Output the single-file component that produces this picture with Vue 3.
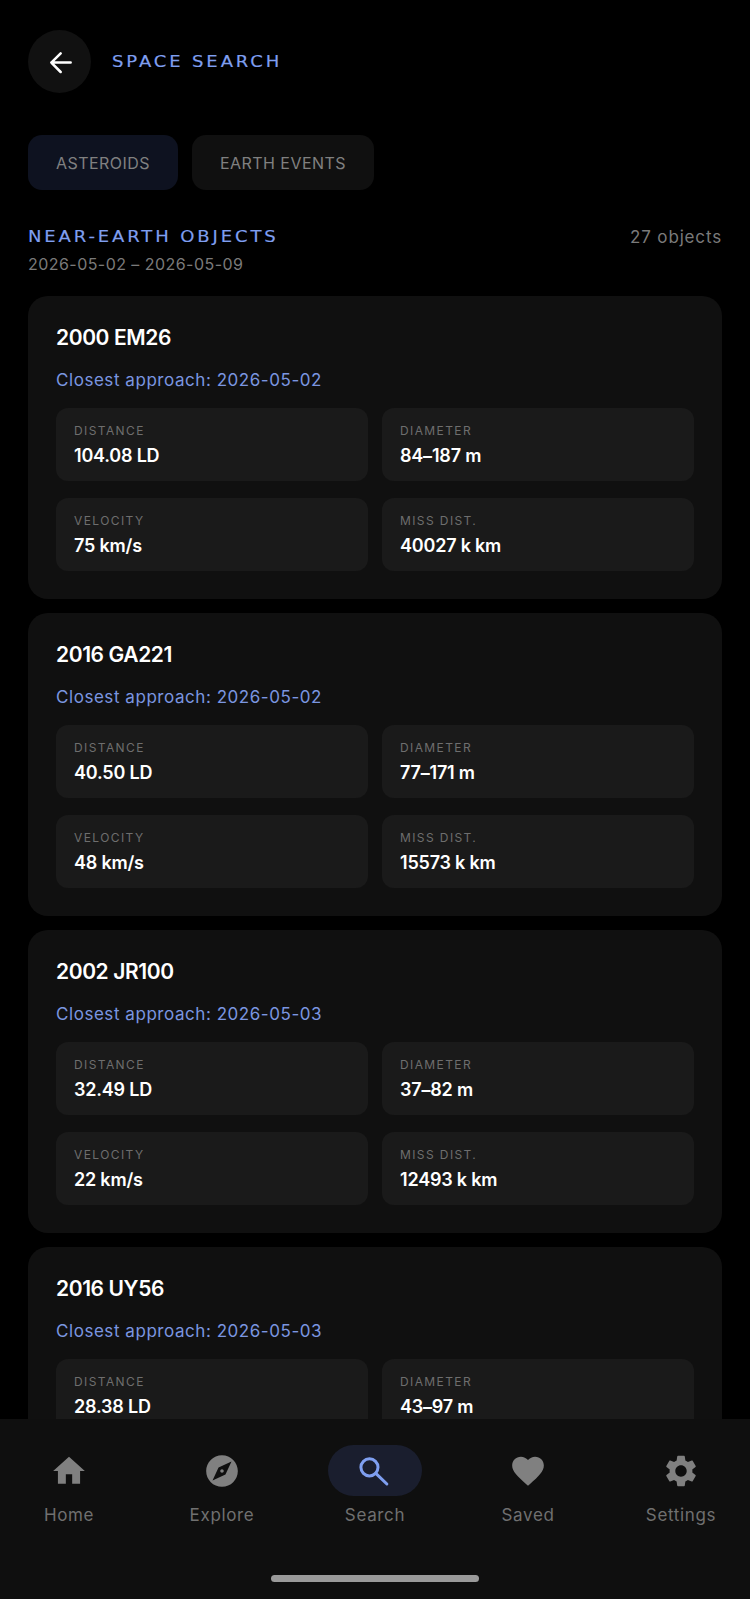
<script setup>
const objects = [
  { name: '2000 EM26', date: '2026-05-02', stats: [['DISTANCE', '104.08 LD'], ['DIAMETER', '84–187 m'], ['VELOCITY', '75 km/s'], ['MISS DIST.', '40027 k km']] },
  { name: '2016 GA221', date: '2026-05-02', stats: [['DISTANCE', '40.50 LD'], ['DIAMETER', '77–171 m'], ['VELOCITY', '48 km/s'], ['MISS DIST.', '15573 k km']] },
  { name: '2002 JR100', date: '2026-05-03', stats: [['DISTANCE', '32.49 LD'], ['DIAMETER', '37–82 m'], ['VELOCITY', '22 km/s'], ['MISS DIST.', '12493 k km']] },
  { name: '2016 UY56', date: '2026-05-03', stats: [['DISTANCE', '28.38 LD'], ['DIAMETER', '43–97 m']] }
]

const navItems = [
  { label: 'Home', d: 'M10 20v-6h4v6h5v-8h3L12 3 2 12h3v8z' },
  { label: 'Explore', d: 'M12 10.9c-.61 0-1.1.49-1.1 1.1s.49 1.1 1.1 1.1c.61 0 1.1-.49 1.1-1.1s-.49-1.1-1.1-1.1zM12 2C6.48 2 2 6.48 2 12s4.48 10 10 10 10-4.48 10-10S17.52 2 12 2zm2.19 12.19L6 18l3.81-8.19L18 6l-3.81 8.19z' },
  { label: 'Search', active: true },
  { label: 'Saved', d: 'M12 21.35l-1.45-1.32C5.4 15.36 2 12.28 2 8.5 2 5.42 4.42 3 7.5 3c1.74 0 3.41.81 4.5 2.09C13.09 3.81 14.76 3 16.5 3 19.58 3 22 5.42 22 8.5c0 3.78-3.4 6.86-8.55 11.54L12 21.35z' },
  { label: 'Settings', d: 'M19.14 12.94c.04-.3.06-.61.06-.94 0-.32-.02-.64-.07-.94l2.03-1.58c.18-.14.23-.41.12-.61l-1.92-3.32c-.12-.22-.37-.29-.59-.22l-2.39.96c-.5-.38-1.03-.7-1.62-.94l-.36-2.54c-.04-.24-.24-.41-.48-.41h-3.84c-.24 0-.43.17-.47.41l-.36 2.54c-.59.24-1.13.57-1.62.94l-2.39-.96c-.22-.08-.47 0-.59.22L2.74 8.87c-.12.21-.08.47.12.61l2.03 1.58c-.05.3-.09.63-.09.94s.02.64.07.94l-2.03 1.58c-.18.14-.23.41-.12.61l1.92 3.32c.12.22.37.29.59.22l2.39-.96c.5.38 1.03.7 1.62.94l.36 2.54c.05.24.24.41.48.41h3.84c.24 0 .44-.17.47-.41l.36-2.54c.59-.24 1.13-.56 1.62-.94l2.39.96c.22.08.47 0 .59-.22l1.92-3.32c.12-.22.07-.47-.12-.61l-2.01-1.58zM12 15.6c-1.98 0-3.6-1.62-3.6-3.6s1.62-3.6 3.6-3.6 3.6 1.62 3.6 3.6-1.62 3.6-3.6 3.6z' }
]
</script>

<template>
  <div class="screen">
    <div class="content">
      <header class="topbar">
        <button class="back-btn">
          <svg viewBox="0 0 24 24" class="back-icon"><path d="M20 12.4H5.5M12.5 5.5l-7 6.9 7 7.1" /></svg>
        </button>
        <span class="page-title">SPACE SEARCH</span>
      </header>

      <div class="tabs">
        <div class="tab tab--active">ASTEROIDS</div>
        <div class="tab">EARTH EVENTS</div>
      </div>

      <div class="section-head">
        <div>
          <div class="section-title">NEAR-EARTH OBJECTS</div>
          <div class="section-range">2026-05-02 – 2026-05-09</div>
        </div>
        <div class="section-count">27 objects</div>
      </div>

      <div class="card-list">
        <article v-for="item in objects" :key="item.name" class="card">
          <h2 class="card-name">{{ item.name }}</h2>
          <div class="card-date">Closest approach: {{ item.date }}</div>
          <div class="stats">
            <div v-for="stat in item.stats" :key="stat[0]" class="stat">
              <div class="stat-label">{{ stat[0] }}</div>
              <div class="stat-value">{{ stat[1] }}</div>
            </div>
          </div>
        </article>
      </div>
    </div>

    <nav class="bottom-nav">
      <div class="nav-row">
        <div v-for="nav in navItems" :key="nav.label" class="nav-item" :class="{ 'nav-item--active': nav.active }">
          <div class="nav-pill">
            <svg v-if="nav.d" viewBox="0 0 24 24" class="nav-icon"><path :d="nav.d" /></svg>
            <svg v-else viewBox="0 0 24 24" class="nav-icon nav-icon--line">
              <circle cx="8.5" cy="9.7" r="5.4" />
              <path d="M12.5 13.5l7 6.7" />
            </svg>
          </div>
          <span class="nav-label">{{ nav.label }}</span>
        </div>
      </div>
      <div class="home-bar"></div>
    </nav>
  </div>
</template>

<style>
html, body {
  margin: 0;
  background: #000;
}
</style>

<style scoped>
.screen {
  width: 750px;
  height: 1599px;
  display: flex;
  flex-direction: column;
  overflow: hidden;
  background: #000;
  font-family: Inter, "Liberation Sans", sans-serif;
}

.content {
  flex: 1;
  min-height: 0;
  overflow: hidden;
  padding: 30px 28px 0;
}

.topbar {
  display: flex;
  align-items: center;
  gap: 21px;
}

.back-btn {
  width: 63px;
  height: 63px;
  padding: 0;
  border: none;
  border-radius: 50%;
  background: #111;
  display: flex;
  align-items: center;
  justify-content: center;
}

.back-icon {
  width: 32px;
  height: 32px;
  fill: none;
  stroke: #fff;
  stroke-width: 1.9;
  stroke-linecap: round;
  stroke-linejoin: round;
}

/* wide caps heading, no squared display face installed so it is stretched */
.page-title,
.section-title {
  display: inline-block;
  font-family: "DejaVu Sans", sans-serif;
  color: #7f9ff0;
  font-size: 15px;
  letter-spacing: 2.4px;
  transform: scaleX(1.2);
  transform-origin: left center;
  -webkit-text-stroke: 0.15px #7f9ff0;
}

.tabs {
  display: flex;
  gap: 14px;
  margin-top: 42px;
}

.tab {
  height: 55px;
  padding: 0 28px;
  display: flex;
  align-items: center;
  border-radius: 14px;
  background: #101010;
  color: #808080;
  font-size: 16px;
  letter-spacing: 0.45px;
}

.tab--active {
  background: #0e1220;
}

.section-head {
  display: flex;
  justify-content: space-between;
  align-items: flex-start;
  margin-top: 37px;
}

.section-title {
  display: block;
  line-height: 20px;
}

.section-range {
  margin-top: 7px;
  color: #7a7a7a;
  font-size: 16px;
  line-height: 20px;
  letter-spacing: 0.45px;
}

.section-count {
  color: #7a7a7a;
  font-size: 17px;
  line-height: 20px;
  letter-spacing: 0.85px;
}

.card-list {
  display: flex;
  flex-direction: column;
  gap: 14px;
  margin-top: 22px;
}

.card {
  padding: 29px 28px 28px;
  border-radius: 20px;
  background: #101010;
}

.card-name {
  margin: 0;
  color: #fff;
  font-size: 21px;
  font-weight: 600;
  line-height: 26px;
  letter-spacing: -0.4px;
}

.card-date {
  margin-top: 18px;
  color: #7b96e0;
  font-size: 17px;
  line-height: 22px;
  letter-spacing: 0.55px;
}

.stats {
  display: grid;
  grid-template-columns: 1fr 1fr;
  gap: 17px 14px;
  margin-top: 17px;
}

.stat {
  height: 73px;
  box-sizing: border-box;
  padding: 15px 18px 0;
  border-radius: 12px;
  background: #1a1a1a;
}

.stat-label {
  color: #6e6e6e;
  font-size: 12px;
  letter-spacing: 1.4px;
  line-height: 16px;
}

.stat-value {
  margin-top: 5px;
  color: #fff;
  font-size: 18px;
  font-weight: 600;
  line-height: 24px;
  letter-spacing: -0.2px;
}

.bottom-nav {
  height: 180px;
  flex-shrink: 0;
  position: relative;
  background: #0f0f0f;
}

.nav-row {
  display: flex;
  justify-content: space-between;
  padding: 26px 22px 0;
}

.nav-item {
  width: 94px;
  display: flex;
  flex-direction: column;
  align-items: center;
}

.nav-pill {
  width: 94px;
  height: 51px;
  border-radius: 26px;
  display: flex;
  align-items: center;
  justify-content: center;
}

.nav-item--active .nav-pill {
  background: #1a1e2e;
}

.nav-icon {
  width: 38px;
  height: 38px;
  fill: #808080;
}

.nav-icon--line {
  fill: none;
  stroke: #7f9ff0;
  stroke-width: 1.9;
  stroke-linecap: round;
}

.nav-label {
  margin-top: 8px;
  color: #707070;
  font-size: 17px;
  line-height: 22px;
  letter-spacing: 0.65px;
  white-space: nowrap;
}

.home-bar {
  position: absolute;
  left: 271px;
  bottom: 17px;
  width: 208px;
  height: 7px;
  border-radius: 4px;
  background: #9a9a9a;
}
</style>
